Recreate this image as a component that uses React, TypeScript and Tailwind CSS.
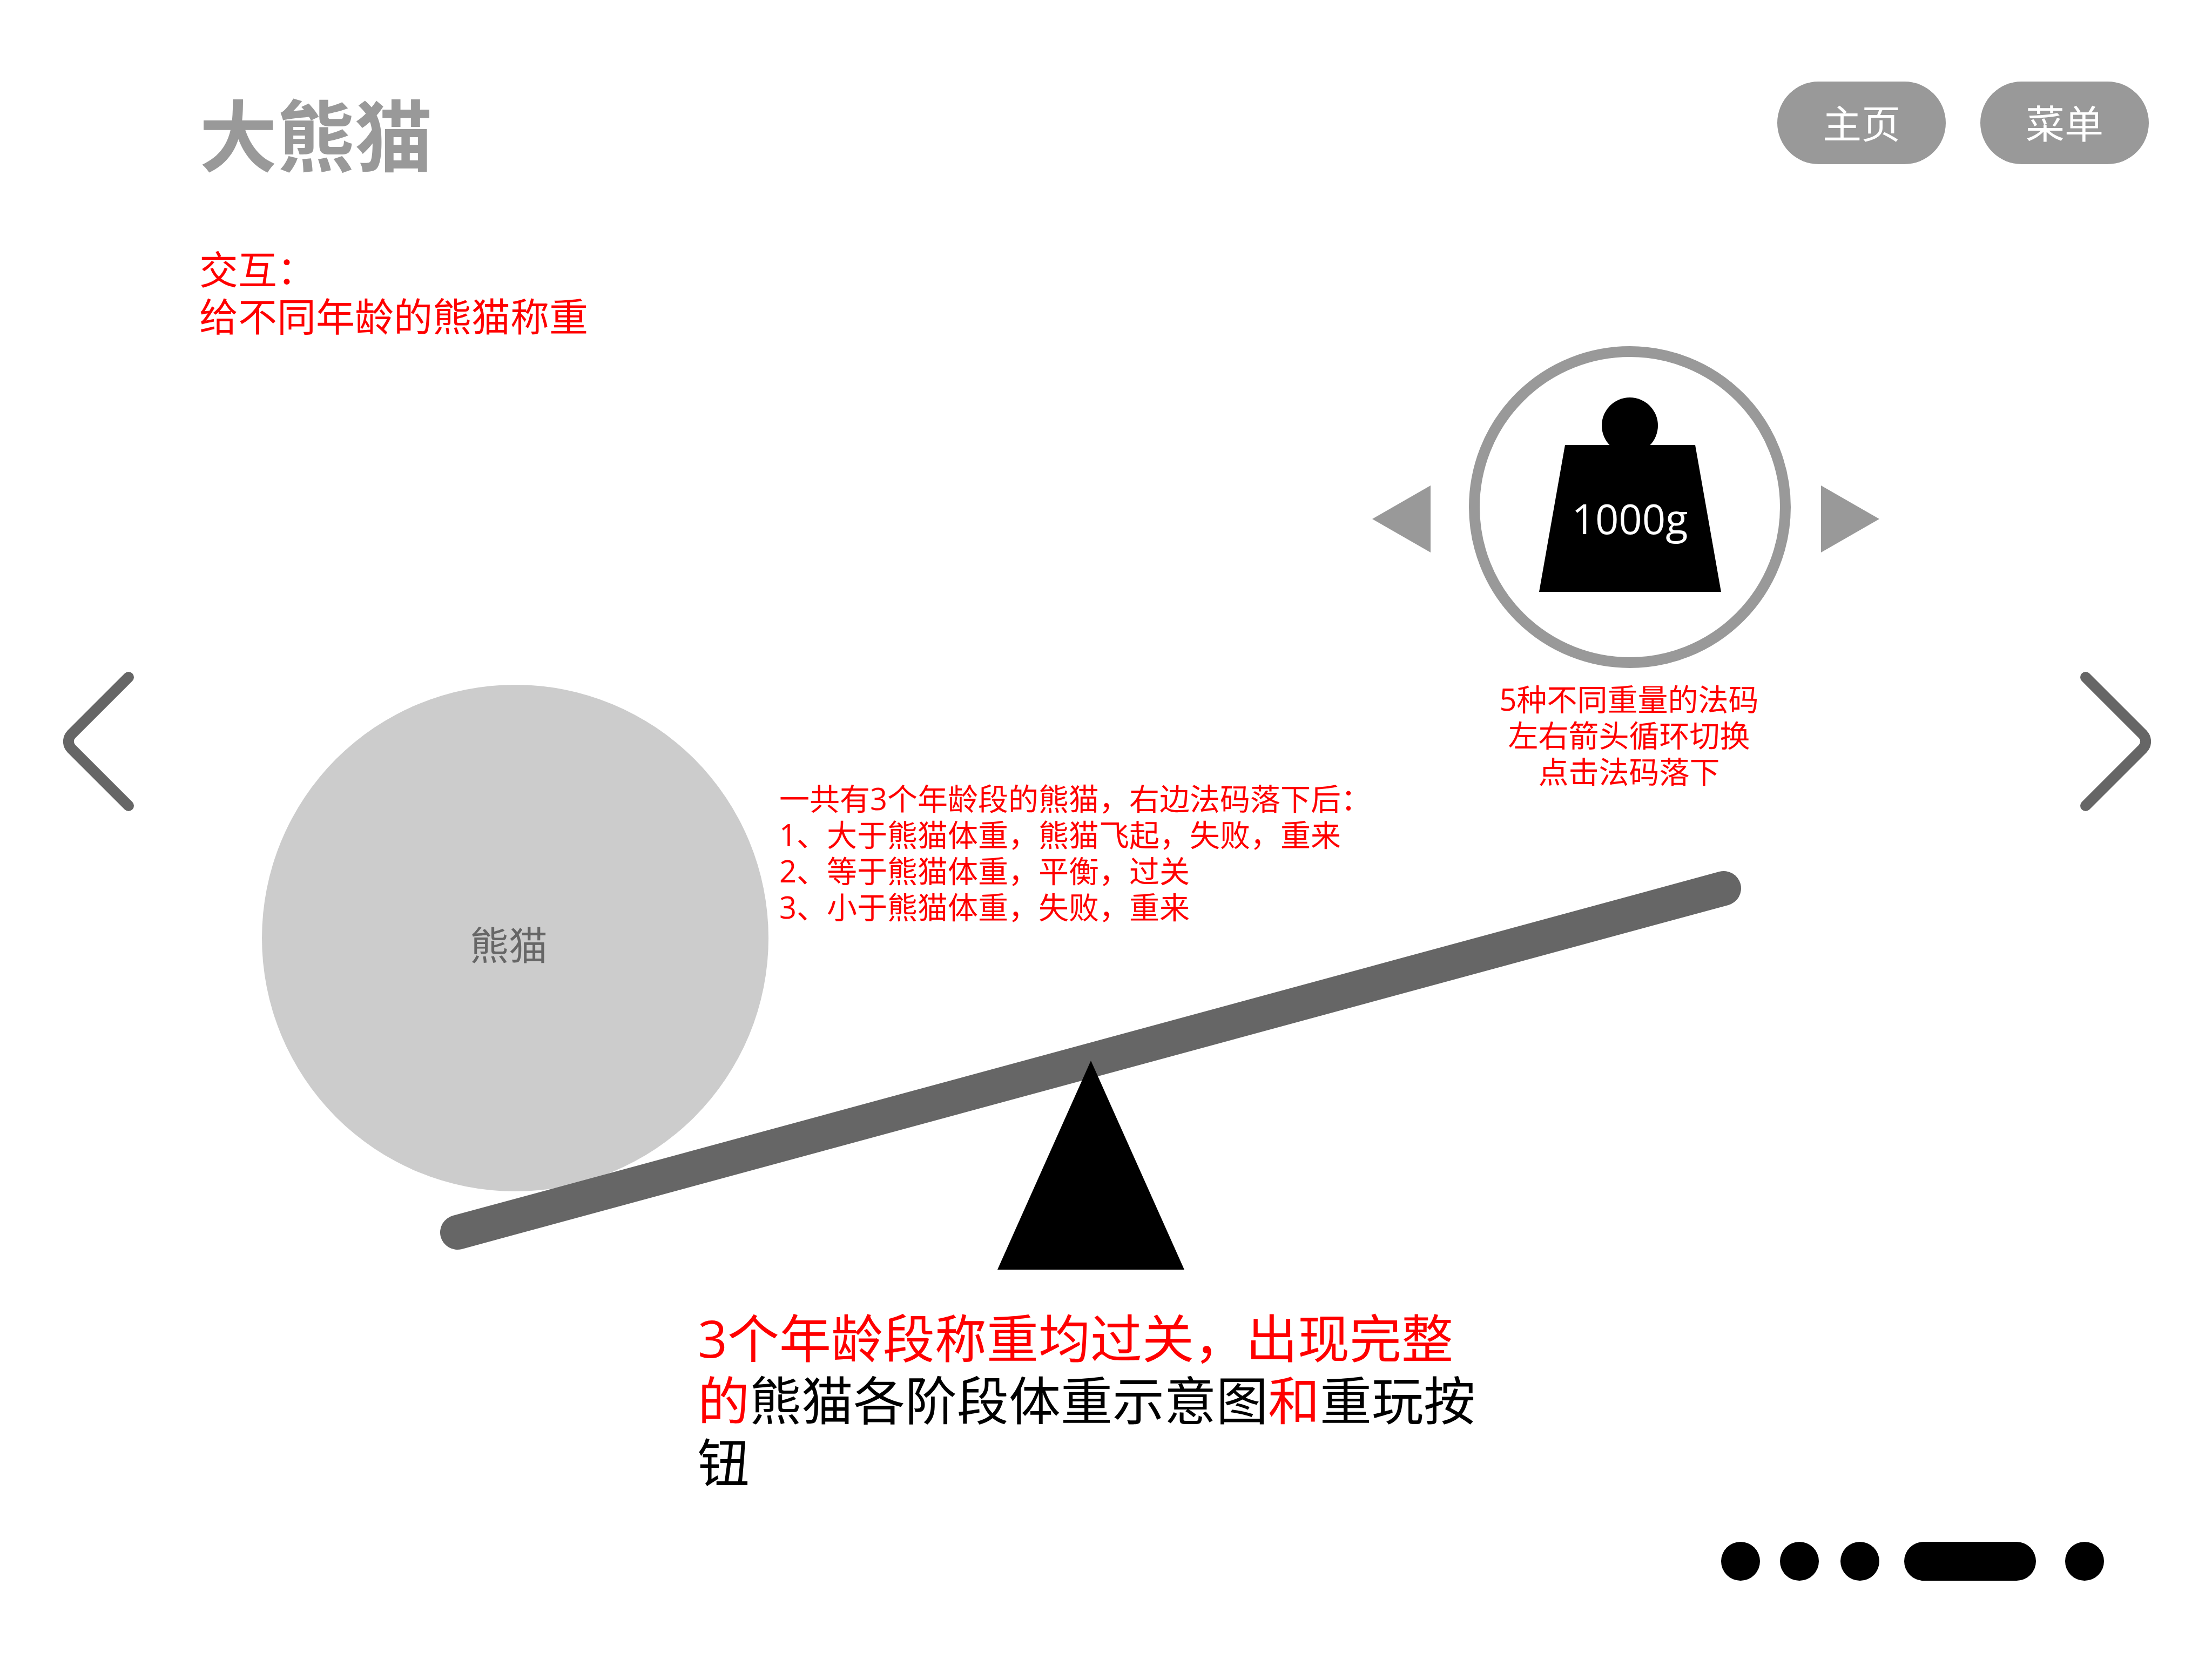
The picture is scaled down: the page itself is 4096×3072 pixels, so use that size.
const dots = [
  { id: 1, cls: "w-[72px]" },
  { id: 2, cls: "ml-[37px] w-[72px]" },
  { id: 3, cls: "ml-10 w-[72px]" },
  { id: 4, cls: "ml-[46px] w-[244px]" },
  { id: 5, cls: "ml-[54px] w-[72px]" },
];

const chevron = "M121 10 L15 116 A19 19 0 0 0 15 142 L121 248";

function NavButton({ children }: { children: string }) {
  return (
    <button type="button" className="h-[153px] w-[312px] rounded-full bg-[#999999] text-[72px] leading-none text-white">
      {children}
    </button>
  );
}

function PageArrow({ label, className, flip }: { label: string; className: string; flip?: boolean }) {
  return (
    <button type="button" aria-label={label} className={className}>
      <svg viewBox="0 0 131 258" className={flip ? "block w-[131px] -scale-x-100" : "block w-[131px]"} fill="none">
        <path d={chevron} stroke="#666666" strokeWidth="20" strokeLinecap="round" />
      </svg>
    </button>
  );
}

function Weight() {
  return (
    <button type="button" aria-label="1000g" className="relative size-[596px] rounded-full border-[20px] border-[#999999]">
      <svg viewBox="0 0 337 360" className="mx-auto block w-[337px] -translate-y-[23px]">
        <circle cx="168" cy="52" r="52" />
        <path d="M48 88 H289 L337 360 H0 Z" />
      </svg>
      <span className="absolute inset-x-0 top-[261px] text-center text-[76px] leading-none text-white">1000g</span>
    </button>
  );
}

export default function App() {
  return (
    <div className="flex min-h-screen flex-col bg-white font-['Open_Sans','Noto_Sans_CJK_SC',sans-serif] text-[#ff0000]">
      <header className="flex items-start justify-between pt-[151px] pr-[117px] pl-[369px]">
        <h1 className="mt-7 text-[144px] leading-[144px] font-bold text-[#999999]">大熊猫</h1>
        <nav className="flex gap-16">
          <NavButton>主页</NavButton>
          <NavButton>菜单</NavButton>
        </nav>
      </header>

      <main className="flex flex-col">
        <p className="mt-[132px] h-[186px] pl-[369px] text-[72px] leading-[87px]">
          交互：
          <br />
          给不同年龄的熊猫称重
        </p>

        <section className="relative flex items-start pr-[113px] pl-[117px]">
          <PageArrow label="上一页" className="mt-[603px] shrink-0" />
          <div className="mt-[627px] ml-[237px] flex size-[938px] shrink-0 items-center justify-center rounded-full bg-[#cccccc] pt-6 pr-6 text-[72px] leading-none text-[#666666]">
            熊猫
          </div>
          <svg viewBox="0 0 2420 760" className="absolute top-[960px] left-[810px] w-[2420px]">
            <path d="M37 681 L2382 44" stroke="#666666" strokeWidth="64" strokeLinecap="round" />
            <path d="M1210 363 L1383 750 H1037 Z" fill="#000000" />
          </svg>
          <div className="relative mt-[804px] ml-5 flex-1 text-[56px] leading-[67px] whitespace-nowrap">
            <p>一共有3个年龄段的熊猫，右边法码落下后：</p>
            <p>1、大于熊猫体重，熊猫飞起，失败，重来</p>
            <p>2、等于熊猫体重，平衡，过关</p>
            <p>3、小于熊猫体重，失败，重来</p>
          </div>
          <div className="relative flex shrink-0 flex-col items-center">
            <div className="flex items-center">
              <button type="button" aria-label="上一个法码" className="mt-11">
                <svg viewBox="0 0 108 124" className="block w-[108px]">
                  <path d="M108 0 V124 L0 62 Z" fill="#999999" />
                </svg>
              </button>
              <div className="mr-14 ml-[71px]">
                <Weight />
              </div>
              <button type="button" aria-label="下一个法码" className="mt-11">
                <svg viewBox="0 0 108 124" className="block w-[108px]">
                  <path d="M0 0 V124 L108 62 Z" fill="#999999" />
                </svg>
              </button>
            </div>
            <p className="mt-6 ml-3 text-center text-[56px] leading-[67px]">
              5种不同重量的法码
              <br />
              左右箭头循环切换
              <br />
              点击法码落下
            </p>
          </div>
          <PageArrow label="下一页" className="mt-[603px] ml-[372px] shrink-0" flip />
        </section>

        <p className="mt-[213px] ml-[1292px] w-[1460px] text-[96px] leading-[115px]">
          3个年龄段称重均过关，出现完整的<span className="text-black">熊猫各阶段体重示意图</span>和
          <span className="text-black">重玩按钮</span>
        </p>
      </main>

      <footer className="mt-auto flex justify-end pr-[200px] pb-[145px]">
        {dots.map((d) => (
          <button key={d.id} type="button" aria-label={"第" + d.id + "页"} className={"h-[72px] rounded-full bg-black " + d.cls} />
        ))}
      </footer>
    </div>
  );
}
